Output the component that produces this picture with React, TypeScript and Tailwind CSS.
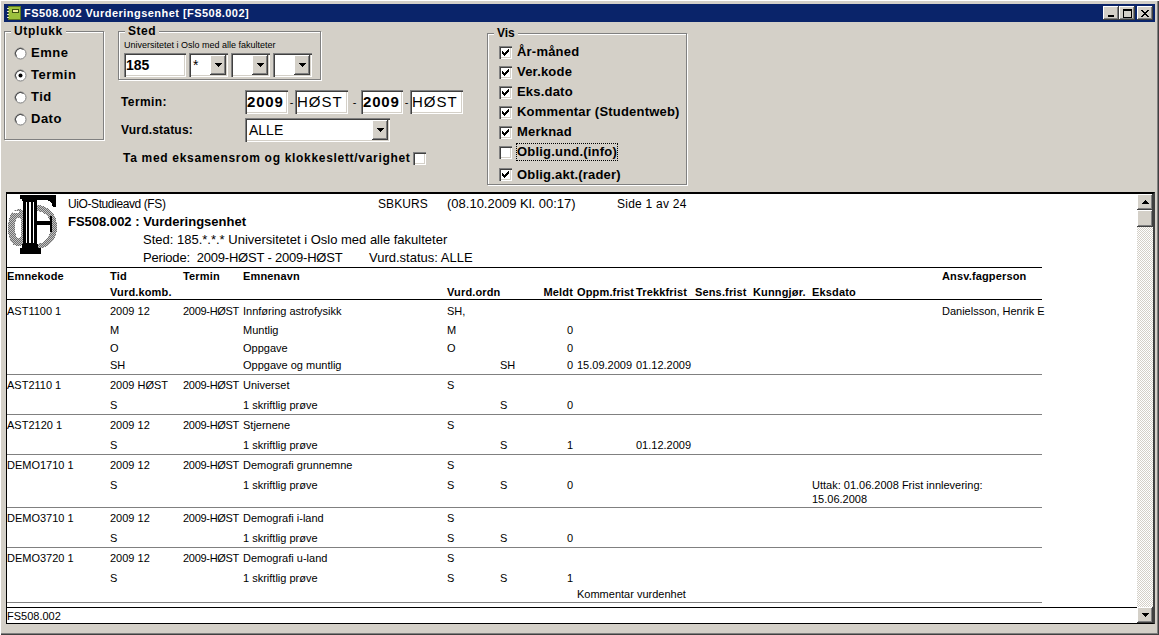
import React from "react";

const raised =
  "shadow-[inset_-1px_-1px_#404040,inset_1px_1px_#ffffff,inset_-2px_-2px_#808080]";
const sunken =
  "shadow-[inset_1px_1px_#808080,inset_2px_2px_#404040,inset_-1px_-1px_#ffffff,inset_-2px_-2px_#d4d0c8]";

const Arrow = ({ up }: { up?: boolean }) => (
  <svg width="7" height="4" viewBox="0 0 7 4" shapeRendering="crispEdges">
    <path d={up ? "M3 0h1v1h1v1h1v1h1v1H0V3h1V2h1V1h1z" : "M0 0h7v1H6v1H5v1H4v1H3V3H2V2H1V1H0z"} fill="#000" />
  </svg>
);

const Combo = ({ w, text }: { w: string; text?: string }) => (
  <div className={`${w} h-[24px] bg-white ${sunken} flex items-center justify-between pl-[4px] pr-[2px] text-[14px] text-black`}>
    <span>{text}</span>
    <div className={`w-[16px] h-[20px] bg-[#d4d0c8] ${raised} flex items-center justify-center`}>
      <Arrow />
    </div>
  </div>
);

const Field = ({ w, text, className }: { w: string; text: string; className?: string }) => (
  <div className={`${w} h-[24px] bg-white ${sunken} flex items-center pl-[2px] text-[15px] text-black ${className ?? ""}`}>
    {text}
  </div>
);

const Radio = ({ label, on }: { label: string; on?: boolean }) => (
  <div className="h-[22px] flex items-center gap-[4px] text-[13px] font-bold text-black">
    <svg width="13" height="13" viewBox="0 0 13 13">
      <circle cx="6.5" cy="6.5" r="5.5" fill="#fff" stroke="#808080" strokeWidth="1" />
      <path d="M2.5 9.5A5 5 0 0 1 9.5 2.5" fill="none" stroke="#404040" strokeWidth="1" />
      {on && <circle cx="6.5" cy="6.5" r="2" fill="#000" />}
    </svg>
    <span className="tracking-[0.5px]">{label}</span>
  </div>
);

const Check = ({ on }: { on?: boolean }) => (
  <div className={`w-[13px] h-[13px] shrink-0 bg-white ${sunken} flex items-center justify-center`}>
    {on && (
      <svg width="7" height="7" viewBox="0 0 7 7" shapeRendering="crispEdges">
        <path d="M6 0h1v3H6v1H5v1H4v1H3v1H2V6H1V5H0V2h1v1h1v1h1V3h1V2h1V1h1z" fill="#000" />
      </svg>
    )}
  </div>
);

const Group = ({ legend, className, legendSize, children }: { legend: string; className: string; legendSize: string; children: React.ReactNode }) => (
  <div className={`relative border border-[#808080] shadow-[1px_1px_#ffffff,inset_1px_1px_#ffffff] ${className}`}>
    <span className={`absolute left-[6px] -top-[9px] leading-[16px] bg-[#d4d0c8] px-[3px] font-bold text-black ${legendSize}`}>
      {legend}
    </span>
    {children}
  </div>
);

const vis = [
  { t: "År-måned", on: true },
  { t: "Ver.kode", on: true },
  { t: "Eks.dato", on: true },
  { t: "Kommentar (Studentweb)", on: true },
  { t: "Merknad", on: true },
  { t: "Oblig.und.(info)", on: false, focus: true },
  { t: "Oblig.akt.(rader)", on: true, h: "h-[25px]" },
];

// kolonner: emnekode, tid, termin, navn, vurd.ordn, kode, meldt, oppm, trekk, sens, kunngjør, eksdato, ansv
const grid = "grid grid-cols-[103px_73px_60px_204px_53px_43px_30px_63px_59px_58px_59px_130px_100px] w-[1035px]";

type Cell = string | undefined;

const Row = ({ cells, h = "h-[20px]", bold }: { cells: Cell[]; h?: string; bold?: boolean }) => (
  <div className={`${grid} ${h} items-center text-[11px] leading-[14px] text-black whitespace-nowrap ${bold ? "font-bold tracking-[0.15px]" : ""}`}>
    {cells.map((c, i) => (
      <span
        key={i}
        className={
          i === 6 ? "text-right" : i === 7 ? "pl-[4px]" : i === 2 && !bold ? "tracking-[-0.3px]" : ""
        }
      >
        {c}
      </span>
    ))}
  </div>
);

const Line = ({ black }: { black?: boolean }) => (
  <div className={`w-[1035px] h-px ${black ? "bg-black" : "bg-[#808080]"}`} />
);

const Logo = () => (
  <svg width="54" height="62" viewBox="0 0 54 62" shapeRendering="crispEdges" className="shrink-0">
    <defs>
      <pattern id="dots" width="2" height="2" patternUnits="userSpaceOnUse">
        <rect width="2" height="2" fill="#c4c4c4" />
        <rect width="1" height="1" fill="#6e6e6e" />
        <rect x="1" y="1" width="1" height="1" fill="#6e6e6e" />
      </pattern>
    </defs>
    {/* grå O og S bak søylen */}
    <path
      fillRule="evenodd"
      d="M11 15C4 15 1 24 1 34s3 18 10 18c3 0 5-1 6-2V18c-1-2-3-3-6-3zM11 24c-2 0-3 5-3 10s1 10 3 10c2 0 3-1 3-2V26c0-1-1-2-3-2z"
      fill="url(#dots)"
    />
    <path d="M6 17h6v2H6z" fill="#fff" />
    <path
      d="M30 11c11 0 20 9 20 22 0 12-8 22-20 22v-5c8 0 14-8 14-17 0-9-6-16-14-16z"
      fill="url(#dots)"
    />
    {/* sort F med søyle */}
    <path d="M13 1h36v12h-3c-1-4-3-7-7-7h-9v1H15V5h-2z" fill="#000" />
    <path d="M16 6h14v44h1v4h3v6H13v-6h2v-4h1z" fill="#000" />
    <path d="M19 8h1v41h-1zM22 8h2v41h-2zM26 8h1v41h-1z" fill="#fff" />
    <path d="M30 27h13v-5h2v16h-2v-7H30z" fill="#000" />
  </svg>
);

export default function App() {
  return (
    <div className="w-[1159px] h-[635px] overflow-hidden bg-[#d4d0c8] p-[4px] shadow-[inset_1px_1px_#ffffff,inset_-1px_-1px_#404040,inset_-2px_-2px_#808080] font-['Liberation_Sans',Arial,sans-serif]">
      {/* titlebar */}
      <div className="h-[18px] bg-[#0a246a] flex items-center pl-[3px] pr-[2px]">
        <svg width="14" height="14" viewBox="0 0 14 14" shapeRendering="crispEdges">
          <rect x="1" y="0" width="13" height="14" fill="#5f7a1f" />
          <rect x="2" y="1" width="11" height="12" fill="#9cc13c" />
          <rect x="0" y="2" width="2" height="1" fill="#e6e6c0" />
          <rect x="0" y="5" width="2" height="1" fill="#e6e6c0" />
          <rect x="0" y="8" width="2" height="1" fill="#e6e6c0" />
          <rect x="0" y="11" width="2" height="1" fill="#e6e6c0" />
          <rect x="5" y="3" width="6" height="3" fill="#f4f0a0" stroke="#3c5010" strokeWidth="1" />
        </svg>
        <span className="ml-[3px] text-[11px] font-bold text-white tracking-[0.46px]">
          FS508.002 Vurderingsenhet [FS508.002]
        </span>
        <div className="ml-auto flex items-center">
          <div className={`w-[16px] h-[14px] bg-[#d4d0c8] ${raised} flex items-end justify-center pb-[3px]`}>
            <div className="w-[6px] h-[2px] bg-black" />
          </div>
          <div className={`w-[16px] h-[14px] bg-[#d4d0c8] ${raised} flex items-center justify-center`}>
            <div className="w-[9px] h-[9px] border border-black border-t-2" />
          </div>
          <div className={`ml-[2px] w-[16px] h-[14px] bg-[#d4d0c8] ${raised} flex items-center justify-center`}>
            <svg width="8" height="7" viewBox="0 0 8 7" shapeRendering="crispEdges">
              <path d="M0 0h2v1h1v1h2V1h1V0h2v1H7v1H6v1H5v1h1v1h1v1h1v1H6V6H5V5H3v1H2v1H0V6h1V5h1V4h1V3H2V2H1V1H0z" fill="#000" />
            </svg>
          </div>
        </div>
      </div>

      {/* form */}
      <div className="h-[170px] flex items-start">
        <Group legend="Utplukk" legendSize="text-[12px] tracking-[0.7px]" className="mt-[9px] w-[100px] h-[109px] pl-[9px] pt-[10px]">
          <Radio label="Emne" />
          <Radio label="Termin" on />
          <Radio label="Tid" />
          <Radio label="Dato" />
        </Group>

        <div className="ml-[14px] w-[345px]">
          <Group legend="Sted" legendSize="text-[12px] tracking-[0.5px]" className="mt-[9px] w-[203px] h-[49px] pl-[5px] pt-[7px]">
            <div className="text-[9px] leading-[12px] text-black mb-[2px]">Universitetet i Oslo med alle fakulteter</div>
            <div className="flex gap-[3px]">
              <Field w="w-[62px]" text="185" className="font-bold !text-[14px]" />
              <Combo w="w-[39px]" text="*" />
              <Combo w="w-[39px]" />
              <Combo w="w-[39px]" />
            </div>
          </Group>
          <div className="mt-[10px] ml-[3px] flex items-center h-[24px]">
            <span className="w-[124px] text-[12px] font-bold text-black tracking-[0.4px]">Termin:</span>
            <Field w="w-[43px]" text="2009" className="font-bold tracking-[0.8px]" />
            <span className="w-[7px] text-center text-[11px] text-black">-</span>
            <Field w="w-[53px]" text="HØST" className="tracking-[1px]" />
            <span className="w-[13px] text-center text-[11px] text-black">-</span>
            <Field w="w-[42px]" text="2009" className="font-bold tracking-[0.8px]" />
            <span className="w-[7px] text-center text-[11px] text-black">-</span>
            <Field w="w-[53px]" text="HØST" className="tracking-[1px]" />
          </div>
          <div className="mt-[4px] ml-[3px] flex items-center h-[24px]">
            <span className="w-[124px] text-[12px] font-bold text-black tracking-[0.2px]">Vurd.status:</span>
            <Combo w="w-[145px]" text="ALLE" />
          </div>
          <div className="mt-[9px] ml-[5px] flex items-center h-[14px]">
            <span className="text-[12px] font-bold text-black tracking-[0.69px] whitespace-nowrap">
              Ta med eksamensrom og klokkeslett/varighet
            </span>
            <div className="ml-[2px]">
              <Check />
            </div>
          </div>
        </div>

        <Group legend="Vis" legendSize="text-[12px]" className="ml-[24px] mt-[11px] w-[200px] h-[152px] pl-[11px] pt-[8px]">
          {vis.map((v) => (
            <div key={v.t} className={`flex items-center gap-[5px] ${v.h ?? "h-[20px]"}`}>
              <Check on={v.on} />
              <span className={`text-[13px] leading-[16px] font-bold text-black tracking-[0.2px] whitespace-nowrap ${v.focus ? "outline-1 outline-dotted outline-black" : ""}`}>
                {v.t}
              </span>
            </div>
          ))}
        </Group>
      </div>

      {/* report */}
      <div className="ml-[2px] h-[432px] border-t-2 border-l border-b border-black border-r-2 border-r-[#404040] flex bg-white">
        <div className="flex-1 min-w-0 flex flex-col">
          <div className="h-[414px] overflow-hidden">
            <div className="flex h-[73px]">
              <Logo />
              <div className="ml-[7px] text-[13px] text-black">
                <div className="h-[19px] flex items-center whitespace-nowrap">
                  <span className="w-[310px] text-[12px] tracking-[-0.4px]">UiO-Studieavd (FS)</span>
                  <span className="w-[69px] text-[12px] tracking-[0.1px]">SBKURS</span>
                  <span className="w-[170px]">(08.10.2009 Kl. 00:17)</span>
                  <span className="text-[12px] tracking-[0.25px]">Side 1 av 24</span>
                </div>
                <div className="h-[18px] flex items-center font-bold">FS508.002 : Vurderingsenhet</div>
                <div className="ml-[75px] h-[18px] flex items-center">Sted: 185.*.*.* Universitetet i Oslo med alle fakulteter</div>
                <div className="ml-[75px] h-[17px] flex items-center whitespace-nowrap">
                  <span className="w-[226px] tracking-[-0.2px]">Periode:&nbsp; 2009-HØST - 2009-HØST</span>
                  <span>Vurd.status: ALLE</span>
                </div>
              </div>
            </div>
            <Line black />
            <Row bold h="h-[16px]" cells={["Emnekode", "Tid", "Termin", "Emnenavn", "", "", "", "", "", "", "", "", "Ansv.fagperson"]} />
            <Row bold h="h-[15px]" cells={["", "Vurd.komb.", "", "", "Vurd.ordn", "", "Meldt", "Oppm.frist", "Trekkfrist", "Sens.frist", "Kunngjør.", "Eksdato"]} />
            <Line black />
            <Row h="h-[21px]" cells={["AST1100 1", "2009 12", "2009-HØST", "Innføring astrofysikk", "SH,", "", "", "", "", "", "", "", "Danielsson, Henrik E"]} />
            <Row h="h-[18px]" cells={["", "M", "", "Muntlig", "M", "", "0"]} />
            <Row h="h-[17px]" cells={["", "O", "", "Oppgave", "O", "", "0"]} />
            <Row h="h-[18px]" cells={["", "SH", "", "Oppgave og muntlig", "", "SH", "0", "15.09.2009", "01.12.2009"]} />
            <Line />
            <Row cells={["AST2110 1", "2009 HØST", "2009-HØST", "Universet", "S"]} />
            <Row h="h-[19px]" cells={["", "S", "", "1 skriftlig prøve", "", "S", "0"]} />
            <Line />
            <Row cells={["AST2120 1", "2009 12", "2009-HØST", "Stjernene", "S"]} />
            <Row h="h-[19px]" cells={["", "S", "", "1 skriftlig prøve", "", "S", "1", "", "01.12.2009"]} />
            <Line />
            <Row cells={["DEMO1710 1", "2009 12", "2009-HØST", "Demografi grunnemne", "S"]} />
            <div className={`${grid} h-[32px] pt-[3px] text-[11px] leading-[14px] text-black whitespace-nowrap`}>
              <span />
              <span>S</span>
              <span />
              <span>1 skriftlig prøve</span>
              <span>S</span>
              <span>S</span>
              <span className="text-right">0</span>
              <span />
              <span />
              <span />
              <span />
              <span className="whitespace-normal w-[180px]">Uttak: 01.06.2008 Frist innlevering: 15.06.2008</span>
            </div>
            <Line />
            <Row cells={["DEMO3710 1", "2009 12", "2009-HØST", "Demografi i-land", "S"]} />
            <Row h="h-[19px]" cells={["", "S", "", "1 skriftlig prøve", "S", "S", "0"]} />
            <Line />
            <Row cells={["DEMO3720 1", "2009 12", "2009-HØST", "Demografi u-land", "S"]} />
            <Row h="h-[19px]" cells={["", "S", "", "1 skriftlig prøve", "S", "S", "1"]} />
            <Row h="h-[13px]" cells={["", "", "", "", "", "", "", "Kommentar vurdenhet"]} />
            <div className="h-[2px]" />
            <Line />
          </div>
          <div className="mt-[-1px] border-t border-black h-[16px] pt-[1px] flex items-center text-[11px] text-black">FS508.002</div>
        </div>

        {/* scrollbar */}
        <div className="w-[16px] flex flex-col bg-[repeating-conic-gradient(#d4d0c8_0_25%,#ffffff_0_50%)] bg-[length:2px_2px]">
          <div className={`h-[16px] bg-[#d4d0c8] ${raised} flex items-center justify-center`}>
            <Arrow up />
          </div>
          <div className={`h-[17px] bg-[#d4d0c8] ${raised}`} />
          <div className={`mt-auto h-[16px] bg-[#d4d0c8] ${raised} flex items-center justify-center`}>
            <Arrow />
          </div>
        </div>
      </div>
    </div>
  );
}
